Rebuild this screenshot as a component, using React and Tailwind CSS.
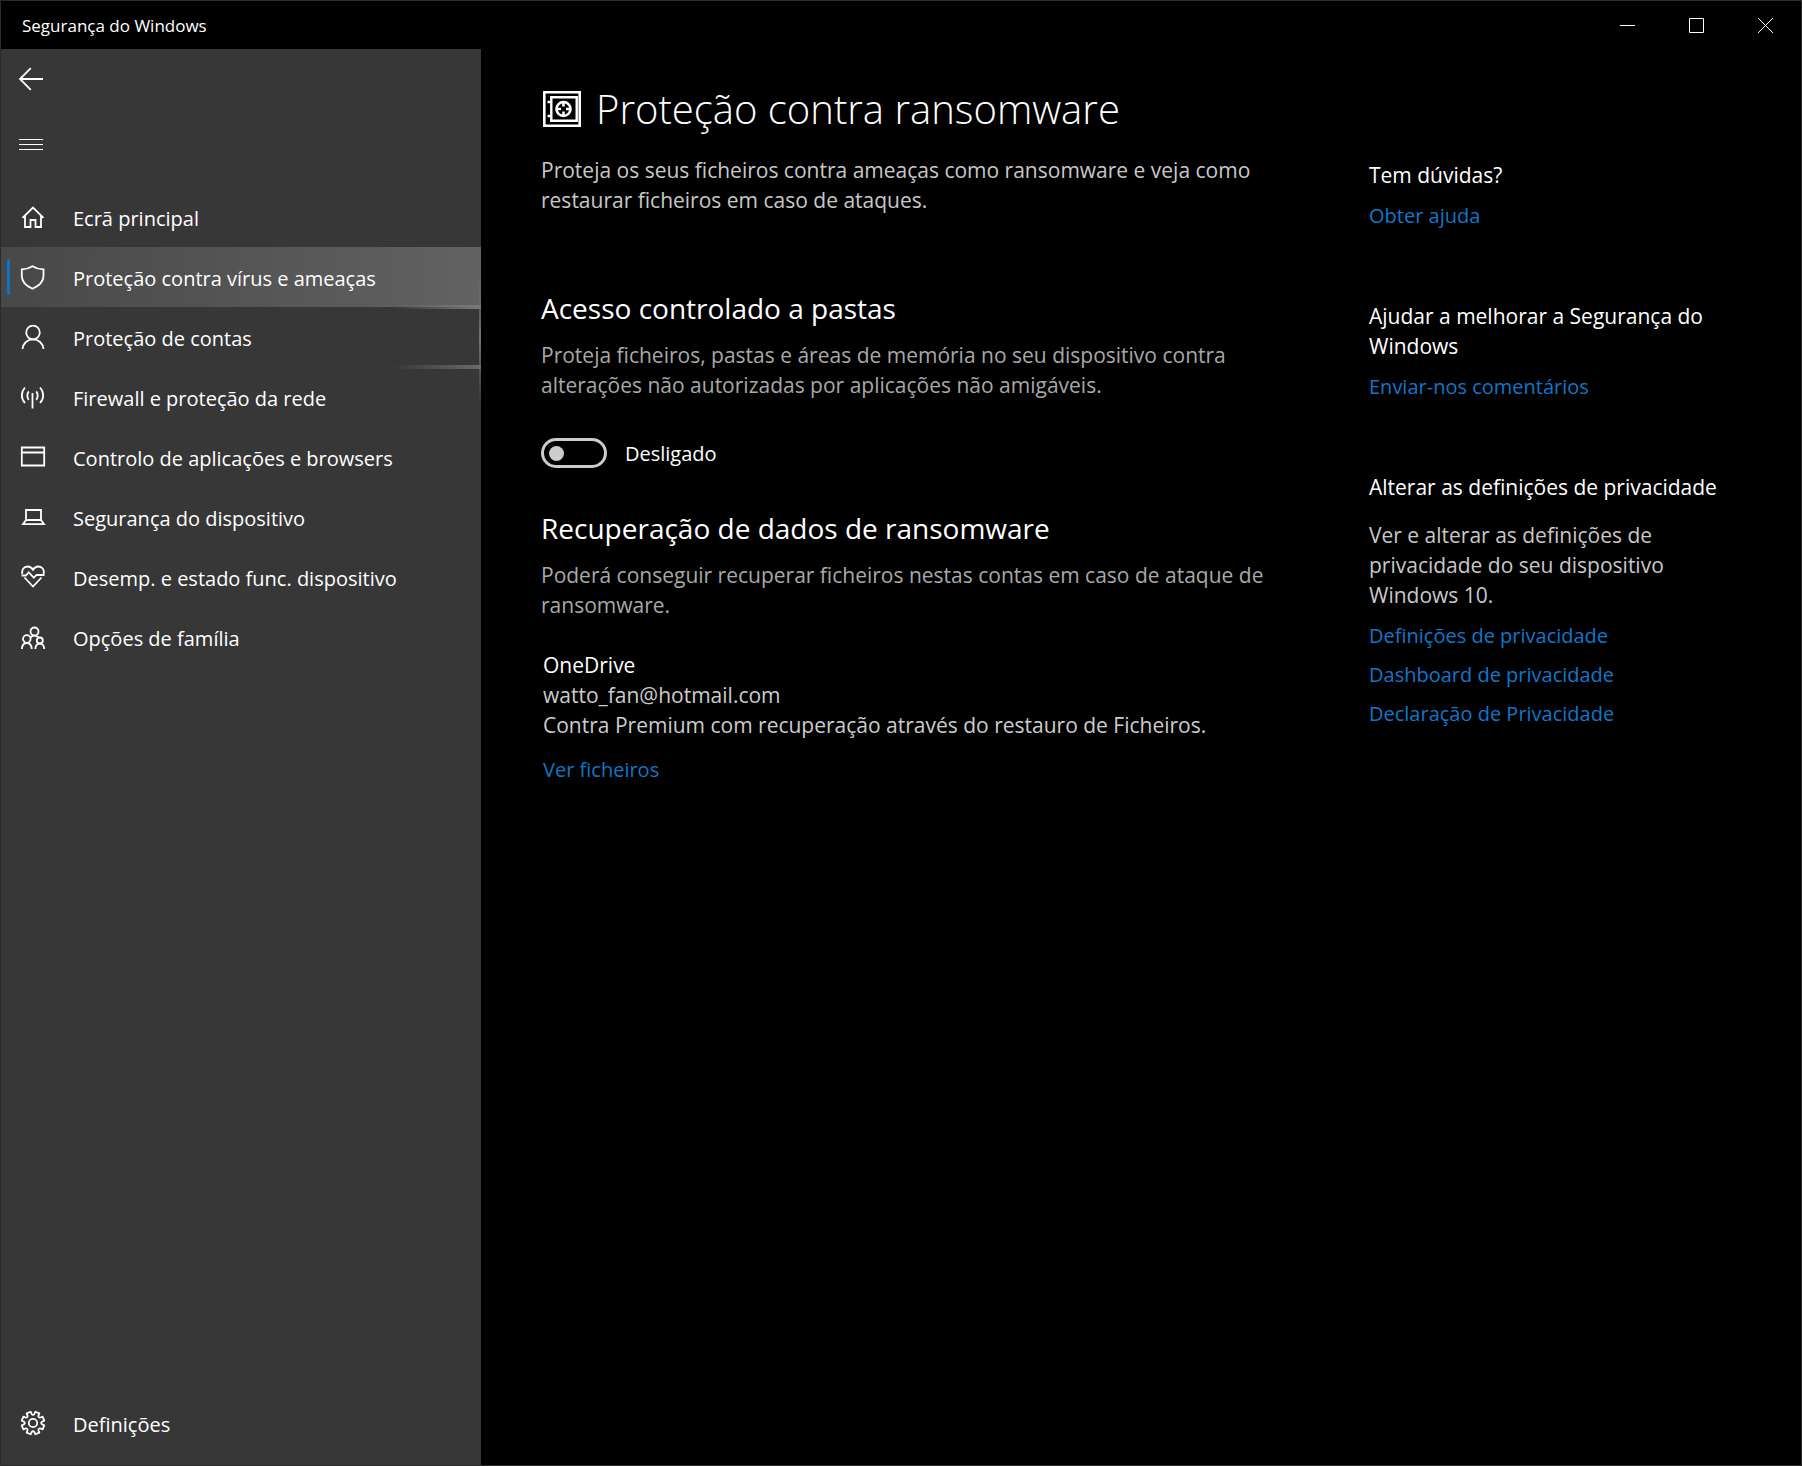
const navItems = [
  { label: 'Ecrã principal', icon: 'home' },
  { label: 'Proteção contra vírus e ameaças', icon: 'shield', active: true },
  { label: 'Proteção de contas', icon: 'person', lit: true },
  { label: 'Firewall e proteção da rede', icon: 'signal' },
  { label: 'Controlo de aplicações e browsers', icon: 'app' },
  { label: 'Segurança do dispositivo', icon: 'laptop' },
  { label: 'Desemp. e estado func. dispositivo', icon: 'heart' },
  { label: 'Opções de família', icon: 'family' },
];

const gearPath = Array.from({ length: 8 }, (_, i) => {
  const base = ((i * 45 + 22.5) * Math.PI) / 180;
  const pt = (r, d) => {
    const a = base + (d * Math.PI) / 180;
    return `${(12 + r * Math.cos(a)).toFixed(2)} ${(12 + r * Math.sin(a)).toFixed(2)}`;
  };
  return `${i ? 'L' : 'M'}${pt(9.2, -14)}L${pt(11.5, -11)}L${pt(11.5, 11)}L${pt(9.2, 14)}Q${pt(7.2, 22.5)} ${pt(9.2, 31)}`;
}).join('') + 'Z';

const drawings = {
  home: (
    <>
      <path d="M1.500 12.800 12 2.500l10.500 10.300" />
      <path d="M4 11V22h5.500v-7h5v7H20V11" />
    </>
  ),
  shield: <path d="M11.500 1.200C14.300 3 17.500 4.200 22.500 4.400V11c0 5.800-4.500 9.800-11 12.800C5 20.800.8 16.800.8 11V4.400c4.700-.2 7.900-1.400 10.700-3.200Z" />,
  person: (
    <>
      <circle cx="12" cy="7.500" r="6.800" />
      <path d="M1.500 24c.6-5.800 5-9.700 10.500-9.700S21.900 18.200 22.500 24" />
    </>
  ),
  signal: (
    <>
      <path d="M11.500 8v15.500M7.800 6.300c-2 2.400-2 6.200 0 8.600M4 2.500C-.2 7 -.2 13.500 4 18M15.200 6.300c2 2.400 2 6.200 0 8.600M19 2.500c4.200 4.500 4.200 11 0 15.500" />
    </>
  ),
  app: (
    <>
      <path d="M.8 2.500h22.400v18H.8zM.8 7.500h22.400" />
    </>
  ),
  laptop: <path d="M5 5h15v10H5zM5 15 2 19.200h21L20 15" />,
  heart: (
    <>
      <path d="M1.300 9C.2 5 2.800 1.500 6.600 1.500c2.400 0 4.200 1.300 5.400 3.300 1.200-2 3-3.300 5.400-3.300 3.800 0 6.400 3.500 5.300 7.500" />
      <path d="M.5 10.500h4.300l3-3.200 5 5.500 2.700-2.800h8M3.500 12.500 12 21.500l8.500-9" />
    </>
  ),
  family: (
    <>
      <circle cx="13.500" cy="6.500" r="4" />
      <circle cx="5.800" cy="14" r="3.800" />
      <circle cx="18.800" cy="15.500" r="3" />
      <path d="M.8 24c.3-3.800 2.300-6 5-6s4.700 2.200 5 6M14.300 24c.3-3.200 2-5.300 4.500-5.300s4.200 2.100 4.500 5.300M9.500 12.300c1.800-2 5.500-2.500 7.800-.2" />
    </>
  ),
  gear: (
    <>
      <path d={gearPath} strokeLinejoin="round" />
      <circle cx="12" cy="12" r="4.200" />
    </>
  ),
  back: <path d="M24 12H1M11.800 1.200 1 12l10.800 10.800" />,
  menu: <path d="M0 6.500h24M0 11.500h24M0 16.500h24" strokeWidth="1" />,
};

function Icon({ name }) {
  return (
    <svg viewBox="0 0 24 24" className="size-6 shrink-0 overflow-visible" fill="none" stroke="currentColor" strokeWidth="1.800" aria-hidden="true">
      {drawings[name]}
    </svg>
  );
}

function SafeIcon() {
  return (
    <svg viewBox="0 0 38 36" className="h-9 w-[38px] shrink-0" fill="none" stroke="currentColor" strokeWidth="2.600" aria-hidden="true">
      <path d="M1.300 1.300h35.400v33.400H1.300z" />
      <path d="M8.300 6.300h25.400v23.400H8.300z" strokeWidth="2.400" />
      <path d="M4.500 11h3M4.500 25h3" />
      <circle cx="20.500" cy="18" r="7" />
      <path d="M20.500 11v4.500M20.500 20.500V25M13.500 18H18M23 18h4.500" />
    </svg>
  );
}

function NavItem({ label, icon, active, lit }) {
  return (
    <li>
      <a
        href="#"
        aria-current={active ? 'page' : undefined}
        className={
          'relative flex h-15 items-center gap-7 pl-5 text-xl ' +
          (active ? 'bg-linear-to-r from-[#484848] to-[#626262]' : '')
        }
      >
        {active && <span className="absolute left-1.5 top-3 h-9 w-[3px] rounded-full bg-[#0f74c8]" />}
        <Icon name={icon} />
        <span className="pt-1">{label}</span>
        {lit && (
          <>
            <span className="absolute -top-0.5 right-0 h-1 w-22 bg-linear-to-l from-[#7a7a7a] to-transparent" />
            <span className="absolute -bottom-0.5 right-0 h-1 w-22 bg-linear-to-l from-[#6a6a6a] to-transparent" />
            <span className="absolute -top-9 right-0 h-33 w-0.5 bg-linear-to-b from-transparent via-[#747474] to-transparent" />
          </>
        )}
      </a>
    </li>
  );
}

function TextLink({ children }) {
  return (
    <a href="#" className="self-start text-xl leading-[39px] text-[#1177cb]">
      {children}
    </a>
  );
}

function CaptionButton({ label, children }) {
  return (
    <button type="button" aria-label={label} className="flex h-full w-[69px] items-center justify-center">
      <svg viewBox="0 0 15 15" className="size-[15px]" fill="none" stroke="currentColor" strokeWidth="1" aria-hidden="true">
        {children}
      </svg>
    </button>
  );
}

export default function App() {
  return (
    <div className="flex min-h-screen flex-col border border-[#2b2b2b] bg-black font-['Open_Sans','Noto_Sans',sans-serif] text-white">
      <header className="flex h-12 items-center justify-between pr-px">
        <span className="pt-0.5 pl-[21px] text-[17px]">Segurança do Windows</span>
        <div className="flex h-full">
          <CaptionButton label="Minimizar">
            <path d="M0 7.500h15" />
          </CaptionButton>
          <CaptionButton label="Maximizar">
            <path d="M.5.5h14v14H.5z" />
          </CaptionButton>
          <CaptionButton label="Fechar">
            <path d="m0 0 15 15M15 0 0 15" />
          </CaptionButton>
        </div>
      </header>

      <div className="flex grow">
        <nav aria-label="Principal" className="flex w-[480px] shrink-0 flex-col bg-[#373737]">
          <button type="button" aria-label="Voltar" className="flex h-15 w-15 items-center pl-[18px]">
            <Icon name="back" />
          </button>
          <button type="button" aria-label="Menu" className="mt-1.5 flex h-15 w-15 items-center pl-[18px]">
            <Icon name="menu" />
          </button>
          <ul className="mt-3">
            {navItems.map((item) => (
              <NavItem key={item.label} {...item} />
            ))}
          </ul>
          <ul className="mt-auto mb-3">
            <NavItem label="Definições" icon="gear" />
          </ul>
        </nav>

        <main className="flex grow pl-[60px] pt-10">
          <div className="w-[740px]">
            <div className="flex items-center gap-[15px] pl-0.5">
              <SafeIcon />
              <h1 className="text-[40px] leading-10 font-light">Proteção contra ransomware</h1>
            </div>
            <p className="mt-[26px] text-[21px] leading-[30px] text-[#c8c8c8]">
              Proteja os seus ficheiros contra ameaças como ransomware e veja como restaurar ficheiros em caso de ataques.
            </p>

            <section className="mt-[73px]">
              <h2 className="text-[28px] leading-10">Acesso controlado a pastas</h2>
              <p className="mt-3 text-[21px] leading-[30px] text-[#a8a8a8]">
                Proteja ficheiros, pastas e áreas de memória no seu dispositivo contra alterações não autorizadas por
                aplicações não amigáveis.
              </p>
              <label className="mt-[38px] flex items-center gap-[18px] text-xl">
                <input
                  type="checkbox"
                  role="switch"
                  className="flex h-[30px] w-[66px] appearance-none items-center rounded-full border-3 border-[#cccccc] pl-[5px] before:size-[15px] before:rounded-full before:bg-[#cccccc] checked:before:ml-9"
                />
                <span className="pt-0.5">Desligado</span>
              </label>
            </section>

            <section className="mt-10">
              <h2 className="text-[28px] leading-10">Recuperação de dados de ransomware</h2>
              <p className="mt-3 text-[21px] leading-[30px] text-[#a8a8a8]">
                Poderá conseguir recuperar ficheiros nestas contas em caso de ataque de ransomware.
              </p>
              <div className="mt-[30px] flex flex-col pl-0.5 text-[21px] leading-[30px] text-[#cccccc]">
                <h3 className="text-white">OneDrive</h3>
                <p>watto_fan@hotmail.com</p>
                <p>Contra Premium com recuperação através do restauro de Ficheiros.</p>
                <div className="mt-2.5 flex flex-col">
                  <TextLink>Ver ficheiros</TextLink>
                </div>
              </div>
            </section>
          </div>

          <aside className="ml-[88px] flex w-[360px] flex-col pt-[71px] text-[21px] leading-[30px]">
            <section className="flex flex-col gap-1.5">
              <h3>Tem dúvidas?</h3>
              <TextLink>Obter ajuda</TextLink>
            </section>
            <section className="mt-[66px] flex flex-col gap-1.5">
              <h3>Ajudar a melhorar a Segurança do Windows</h3>
              <TextLink>Enviar-nos comentários</TextLink>
            </section>
            <section className="mt-[66px] flex flex-col">
              <h3>Alterar as definições de privacidade</h3>
              <p className="mt-[18px] mb-1.5 w-[320px] text-[#c8c8c8]">
                Ver e alterar as definições de privacidade do seu dispositivo Windows 10.
              </p>
              <TextLink>Definições de privacidade</TextLink>
              <TextLink>Dashboard de privacidade</TextLink>
              <TextLink>Declaração de Privacidade</TextLink>
            </section>
          </aside>
        </main>
      </div>
    </div>
  );
}
